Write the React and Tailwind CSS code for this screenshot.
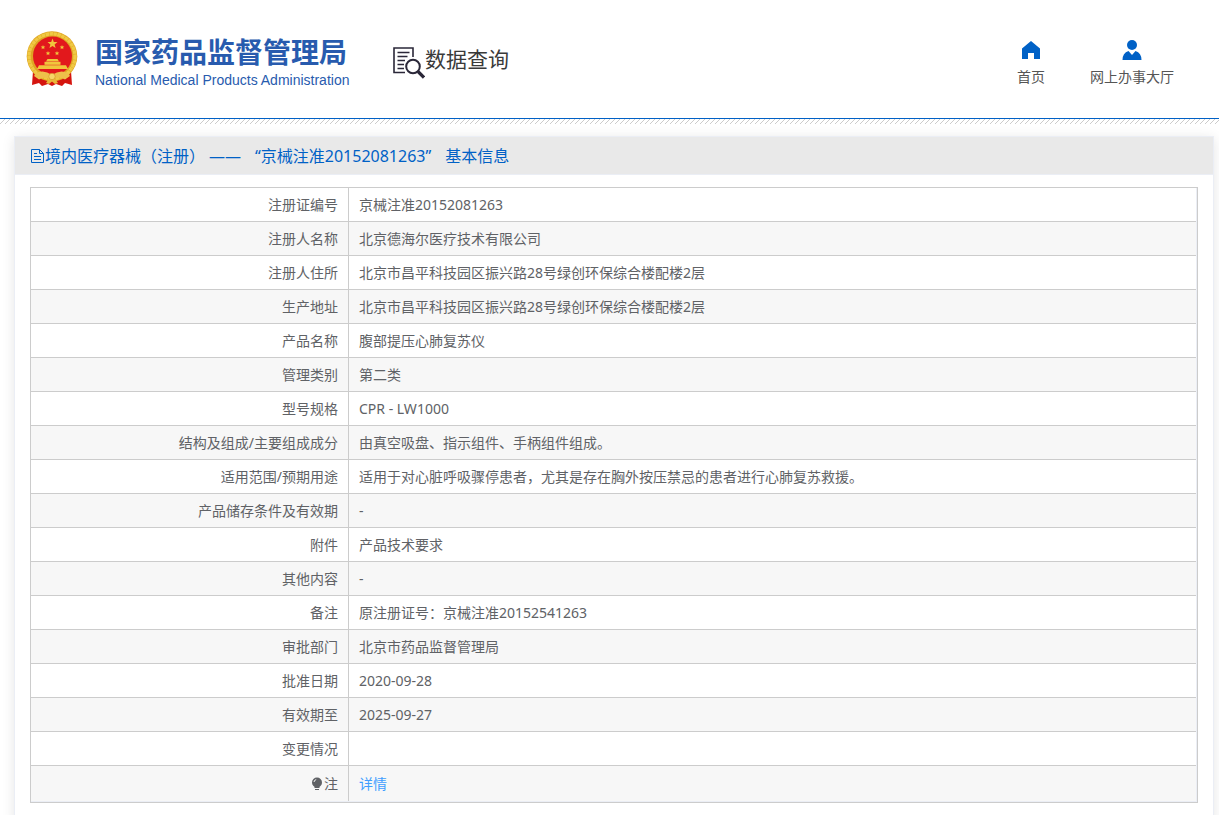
import { useState } from "react";

const details = [
    { label: "注册证编号", value: "京械注准20152081263" },
    { label: "注册人名称", value: "北京德海尔医疗技术有限公司" },
    {
        label: "注册人住所",
        value: "北京市昌平科技园区振兴路28号绿创环保综合楼配楼2层",
    },
    {
        label: "生产地址",
        value: "北京市昌平科技园区振兴路28号绿创环保综合楼配楼2层",
    },
    { label: "产品名称", value: "腹部提压心肺复苏仪" },
    { label: "管理类别", value: "第二类" },
    { label: "型号规格", value: "CPR - LW1000" },
    { label: "结构及组成/主要组成成分", value: "由真空吸盘、指示组件、手柄组件组成。" },
    {
        label: "适用范围/预期用途",
        value: "适用于对心脏呼吸骤停患者，尤其是存在胸外按压禁忌的患者进行心肺复苏救援。",
    },
    { label: "产品储存条件及有效期", value: "-" },
    { label: "附件", value: "产品技术要求" },
    { label: "其他内容", value: "-" },
    { label: "备注", value: "原注册证号：京械注准20152541263" },
    { label: "审批部门", value: "北京市药品监督管理局" },
    { label: "批准日期", value: "2020-09-28" },
    { label: "有效期至", value: "2025-09-27" },
    { label: "变更情况", value: "" },
];

function Emblem() {
    return (
        <svg viewBox="0 0 52 56" className="h-14 w-[52px] shrink-0" aria-hidden="true">
            <path d="M7 41 L45 41 L46 55 L39 53 L36 56 L30 54 L26 56 L22 54 L16 56 L13 53 L6 55 Z" fill="#d5150f" />
            <ellipse cx="26" cy="26.3" rx="25.3" ry="25" fill="#dfa523" />
            <ellipse cx="26" cy="26.3" rx="23" ry="22.5" fill="none" stroke="#f0c944" strokeWidth="3.4" strokeDasharray="3.5 0.5" />
            <circle cx="26.5" cy="26" r="19.5" fill="#e2181c" />
            <g fill="#f0c63c">
                <path d="M26.5 8.5 L27.8 12 L31.5 12.1 L28.6 14.4 L29.6 18 L26.5 15.9 L23.4 18 L24.4 14.4 L21.5 12.1 L25.2 12 Z" />
                <path d="M17 15 l.6 1.6 1.7 0 -1.3 1.1 .5 1.6 -1.5 -1 -1.5 1 .5 -1.6 -1.3 -1.1 1.7 0 Z" />
                <path d="M36 15 l.6 1.6 1.7 0 -1.3 1.1 .5 1.6 -1.5 -1 -1.5 1 .5 -1.6 -1.3 -1.1 1.7 0 Z" />
                <path d="M22 21 l.6 1.6 1.7 0 -1.3 1.1 .5 1.6 -1.5 -1 -1.5 1 .5 -1.6 -1.3 -1.1 1.7 0 Z" />
                <path d="M31 21 l.6 1.6 1.7 0 -1.3 1.1 .5 1.6 -1.5 -1 -1.5 1 .5 -1.6 -1.3 -1.1 1.7 0 Z" />
                <path d="M21.5 29 H31.5 L33 31.5 H20 Z" />
                <rect x="18.5" y="31.8" width="16" height="3" />
                <path d="M13 35.3 H40 L42 39 H11 Z" />
            </g>
            <path d="M10 43 Q18 39 26 45 Q34 39 42 43 L44 46 L39 49.5 Q32 45 26 50.5 Q20 45 13 49.5 L8 46 Z" fill="#eec04a" />
            <path d="M20 53 L23 48.5 H29 L32 53 L29 54 L26 51.5 L23 54 Z" fill="#e9b73a" />
            <circle cx="26" cy="46.5" r="3.2" fill="#f6d768" stroke="#cf8f1d" strokeWidth="0.6" />
        </svg>
    );
}

function SearchDocIcon() {
    return (
        <svg viewBox="0 0 32 32" className="h-8 w-8" fill="none" stroke="#2a2738" aria-hidden="true">
            <path d="M20 10 V1 H1 V25.5 H12" strokeWidth="1.6" />
            <path d="M4.5 5.5 H16.5 M4.5 9.5 H14.5 M4.5 13.5 H12 M4.5 17.5 H11 M4.5 21.5 H11" strokeWidth="1.4" />
            <circle cx="20" cy="19.5" r="6.8" strokeWidth="2" />
            <path d="M25 24.5 L31 30.5" strokeWidth="3.2" />
        </svg>
    );
}

function HomeIcon() {
    return (
        <svg viewBox="0 0 20 20" className="h-5 w-5" fill="#0061c6" aria-hidden="true">
            <path d="M10 1 L19 8.5 V19 H13 V13 H7 V19 H1 V8.5 Z" />
        </svg>
    );
}

function UserIcon() {
    return (
        <svg viewBox="0 0 20 20" className="h-5 w-5" fill="#0061c6" aria-hidden="true">
            <circle cx="10" cy="5" r="5" />
            <path d="M6.5 11 L10 15 L13.5 11 Q19.5 13 19.5 20 H0.5 Q0.5 13 6.5 11 Z" />
        </svg>
    );
}

function DocumentIcon() {
    return (
        <svg viewBox="0 0 15 16" className="h-4 w-[15px]" fill="none" stroke="#0061c6" aria-hidden="true">
            <path d="M1.5 1.5 H9.5 L13.5 5.5 V14.5 H1.5 Z M9.5 1.5 V5.5 H13.5 M4 5.5 H7 M4 8.5 H11 M4 11.5 H11" />
        </svg>
    );
}

function BulbIcon() {
    return (
        <svg viewBox="0 0 12 14" className="h-3.5 w-3" fill="#606266" aria-hidden="true">
            <circle cx="6" cy="5.5" r="5" />
            <path d="M3.5 9 H8.5 V11 H3.5 Z M4 12 H8 V13 H4 Z" />
            <path d="M3 5 Q3.2 3 5.2 2.6" fill="none" stroke="#f7f7f7" />
        </svg>
    );
}

function Header() {
    return (
        <header className="flex h-[119px] items-start justify-between border-b border-[#0061c6] pr-[45px] pl-[26px]">
            <div className="flex pt-[30px]">
                <Emblem />
                <div className="ml-[17px] w-64 text-[#285bae]">
                    <h1 className="text-[28px] leading-[44px] font-bold whitespace-nowrap">国家药品监督管理局</h1>
                    <p className="font-['Liberation_Sans',sans-serif] text-[14px] leading-[12px] whitespace-nowrap">
                        National Medical Products Administration
                    </p>
                </div>
                <div className="ml-[42px] flex items-start text-[#3a3a3a]">
                    <div className="pt-[17px]">
                        <SearchDocIcon />
                    </div>
                    <span className="text-[21px] leading-[58px] whitespace-nowrap">数据查询</span>
                </div>
            </div>
            <nav className="flex gap-[45px] pt-10 text-[14px] leading-[33px] text-[#555]">
                <a href="#" className="flex flex-col items-center">
                    <HomeIcon />
                    首页
                </a>
                <a href="#" className="flex flex-col items-center">
                    <UserIcon />
                    网上办事大厅
                </a>
            </nav>
        </header>
    );
}

export default function App() {
    const [showNote, setShowNote] = useState(false);

    return (
        <div className="bg-white font-['Noto_Sans','Noto_Sans_CJK_SC',sans-serif]">
            <Header />
            <div className="h-[5px] bg-[linear-gradient(135deg,transparent_42%,#ccc_42%,#ccc_58%,transparent_58%)] bg-[length:5px_5px]" />
            <main className="mt-3 mr-[5px] ml-[14px] border border-[#ebeef5] shadow-[0_2px_12px_rgba(0,0,0,0.1)]">
                <h2 className="flex h-[38px] items-center border-b border-[#ebeef5] bg-[#e9e9e9] pl-[15px] text-[16px] text-[#0061c6]">
                    <DocumentIcon />
                    <span>境内医疗器械（注册）</span>
                    <span className="mr-[14px] ml-1">——</span>
                    <span className="mr-[14px]">“京械注准20152081263”</span>
                    <span>基本信息</span>
                </h2>
                <div className="px-[15px] pt-3 pb-5">
                    <div className="border border-[#ccc]">
                        <table className="w-full table-fixed border-separate border-spacing-0 border-r border-b border-[#ebeef5] text-[14px] leading-[23px] text-[#606266]">
                            <colgroup>
                                <col className="w-[318px]" />
                                <col />
                            </colgroup>
                            <tbody>
                                {details.map((item) => (
                                    <tr key={item.label} className="h-[34px] even:bg-[#f7f7f7]">
                                        <th className="border-r border-b border-[#ccc] px-[10px] text-right font-normal">
                                            {item.label}
                                        </th>
                                        <td className="border-b border-[#ccc] px-[10px]">{item.value}</td>
                                    </tr>
                                ))}
                                <tr className="h-[35px] bg-[#f7f7f7]">
                                    <th className="border-r border-[#ccc] px-[10px] font-normal">
                                        <span className="flex items-center justify-end gap-px">
                                            <BulbIcon />注
                                        </span>
                                    </th>
                                    <td className="px-[10px]">
                                        <button
                                            type="button"
                                            className="text-[#409eff]"
                                            onClick={() => setShowNote(!showNote)}
                                        >
                                            详情
                                        </button>
                                    </td>
                                </tr>
                            </tbody>
                        </table>
                    </div>
                </div>
            </main>
        </div>
    );
}
